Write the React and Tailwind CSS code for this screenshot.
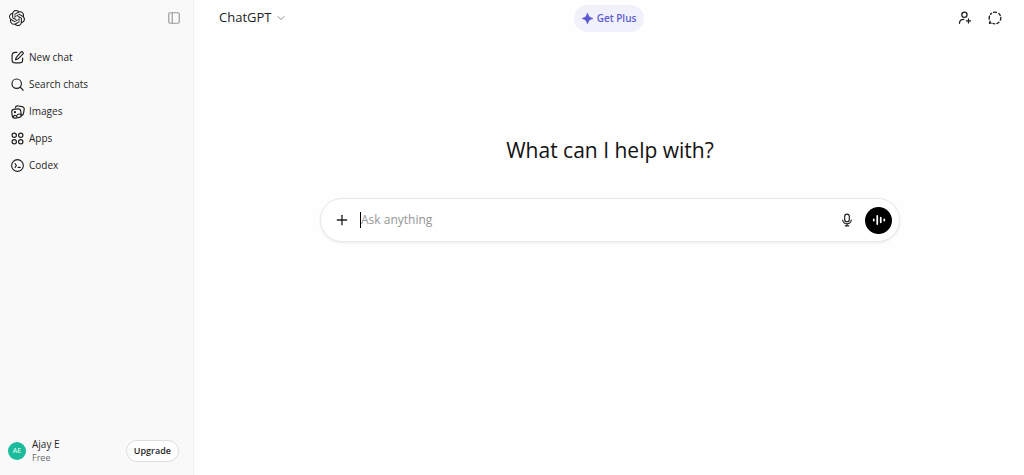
import { ChevronDown, Plus, PanelLeft } from 'lucide-react';
import { SiOpenai } from 'react-icons/si';

function StrokeIcon({ className, strokeWidth = 2, children }) {
  return (
    <svg
      className={className}
      viewBox="0 0 24 24"
      fill="none"
      stroke="currentColor"
      strokeWidth={strokeWidth}
      strokeLinecap="round"
      strokeLinejoin="round"
      aria-hidden="true"
    >
      {children}
    </svg>
  );
}

function NewChatIcon() {
  return (
    <StrokeIcon className="size-[13px]" strokeWidth={2.2}>
      <path d="M11 2.500H8C4 2.500 2 4.500 2 8.500V16c0 4 2 6 6 6h7.500c4 0 6-2 6-6v-3" />
      <path d="M18.200 2.200a2.400 2.400 0 0 1 3.500 3.500L14 13.500c-1.400 1.400-3.400 2.300-5.500 2.500.2-2.100 1.100-4.100 2.500-5.500z" />
    </StrokeIcon>
  );
}

function SearchIcon() {
  return (
    <StrokeIcon className="size-[13px]" strokeWidth={2.2}>
      <circle cx="10.500" cy="10.500" r="8.700" />
      <path d="m17 17 5.500 5.500" />
    </StrokeIcon>
  );
}

function ImagesIcon() {
  return (
    <StrokeIcon className="size-[14px]">
      <path d="M7.500 5C8 2.300 9.500 1.300 12 1.700l7 1.100c2.800.5 4 2 3.600 4.700l-1.200 7c-.3 2-1.300 3.200-3 3.700" />
      <rect x="1.700" y="7" width="15.500" height="15" rx="4.500" transform="rotate(-8 9.500 14.500)" />
      <circle cx="6.800" cy="12.200" r="1" />
      <path d="M3.500 20c3-3 5-3 7.500 1.500M10 18c2-3 4.500-3.500 7.500-1" />
    </StrokeIcon>
  );
}

function AppsIcon() {
  return (
    <StrokeIcon className="size-[13px]" strokeWidth={2.2}>
      <circle cx="6" cy="6" r="4" />
      <circle cx="18" cy="6" r="4" />
      <circle cx="6" cy="18" r="4" />
      <circle cx="18" cy="18" r="4" />
    </StrokeIcon>
  );
}

function CodexIcon() {
  return (
    <StrokeIcon className="size-[13px]" strokeWidth={2.1}>
      <circle cx="12" cy="12" r="10.800" />
      <path d="m7.500 8.500 2.500 3.500-2.500 3.500M13 15.500h4" />
    </StrokeIcon>
  );
}

function AddPersonIcon() {
  return (
    <StrokeIcon className="size-[14px]" strokeWidth={2.2}>
      <circle cx="11" cy="6.500" r="4.500" />
      <path d="M2.500 21c.3-4.300 3-6.500 7.500-6.500M18 13.500v7M14.500 17h7" />
    </StrokeIcon>
  );
}

function TemporaryChatIcon() {
  return (
    <StrokeIcon className="size-[14px]" strokeWidth={2.3}>
      <path d="M9.500 2.300a10 10 0 0 1 5 0M18.500 4.400a10 10 0 0 1 2.500 3.300M22 11a10 10 0 0 1-.7 4.600M18.800 19.300a10 10 0 0 1-3.600 2.200M11.500 22a10 10 0 0 1-3-.6M5.500 20.800 2.500 21l1-3.500M2.200 14a10 10 0 0 1 .3-5M4.500 5.500a10 10 0 0 1 1.500-1.400" />
    </StrokeIcon>
  );
}

function MicIcon() {
  return (
    <StrokeIcon className="size-[14px]">
      <rect x="8" y="2" width="8" height="13" rx="4" />
      <path d="M4.500 12c.8 4 3.700 6.500 7.500 6.500s6.700-2.500 7.500-6.500M12 18.500V22M9 22h6" />
    </StrokeIcon>
  );
}

function VoiceIcon() {
  return (
    <StrokeIcon className="size-[14px]" strokeWidth={3}>
      <path d="M3 11v2M9 5v14M15 8v8M21 11v2" />
    </StrokeIcon>
  );
}

function SparkleIcon() {
  return (
    <svg className="size-[11px]" viewBox="0 0 24 24" fill="currentColor" aria-hidden="true">
      <path d="M12 0c1 0 1.500.8 1.800 2.500 1 4.500 3.200 6.700 7.700 7.700 1.700.3 2.500.8 2.500 1.800s-.8 1.500-2.500 1.800c-4.500 1-6.700 3.200-7.700 7.700C13.500 23.200 13 24 12 24s-1.500-.8-1.800-2.500c-1-4.500-3.200-6.700-7.700-7.700C.8 13.500 0 13 0 12s.8-1.500 2.500-1.800c4.500-1 6.700-3.200 7.700-7.700C10.500.8 11 0 12 0z" />
    </svg>
  );
}

const navItems = [
  { label: 'New chat', Icon: NewChatIcon },
  { label: 'Search chats', Icon: SearchIcon },
  { label: 'Images', Icon: ImagesIcon },
  { label: 'Apps', Icon: AppsIcon },
  { label: 'Codex', Icon: CodexIcon },
];

function Sidebar() {
  return (
    <aside className="flex w-[194px] shrink-0 flex-col border-r border-[#f0f0f0] bg-[#f9f9f9]">
      <div className="flex h-9 items-center justify-between pr-3 pl-[9px]">
        <a href="#" aria-label="Home">
          <SiOpenai className="size-4" />
        </a>
        <button aria-label="Close sidebar" className="text-[#9a9a9a]">
          <PanelLeft className="size-[14px]" strokeWidth={2} />
        </button>
      </div>

      {/* Navigation */}
      <nav className="mt-2">
        {navItems.map(({ label, Icon }) => (
          <a key={label} href="#" className="flex h-[27px] items-center gap-1 px-[10px] text-[10px]">
            <span className="flex w-[15px] justify-center">
              <Icon />
            </span>
            {label}
          </a>
        ))}
      </nav>

      {/* Account */}
      <div className="mt-auto flex items-center px-2 pb-[10px]">
        <span className="flex size-[18px] items-center justify-center rounded-full bg-[#1abc9c] text-[7px] text-white">
          AE
        </span>
        <div className="ml-[6px] flex-1">
          <p className="text-[10px] leading-[14px]">Ajay E</p>
          <p className="text-[9px] leading-[14px] text-[#6b6b6b]">Free</p>
        </div>
        <button className="mr-[6px] h-[22px] rounded-full border border-[#dedede] bg-white px-[7px] text-[9px] font-semibold">
          Upgrade
        </button>
      </div>
    </aside>
  );
}

function Header() {
  return (
    <header className="grid h-9 grid-cols-3 items-center px-[22px]">
      <button className="ml-[3px] flex items-center gap-1 justify-self-start text-[13px]">
        ChatGPT
        <ChevronDown className="size-3 text-[#8f8f8f]" />
      </button>
      <button className="flex h-[27px] items-center gap-1 justify-self-center rounded-full bg-[#f1f1fc] px-2 text-[10px] font-semibold text-[#5d5bd0]">
        <SparkleIcon />
        Get Plus
      </button>
      <div className="flex items-center gap-4 justify-self-end">
        <button aria-label="Add people">
          <AddPersonIcon />
        </button>
        <button aria-label="Temporary chat">
          <TemporaryChatIcon />
        </button>
      </div>
    </header>
  );
}

function Composer() {
  return (
    <form
      className="flex h-11 w-full max-w-[580px] items-center rounded-full border border-[#e8e8e8] bg-white pr-[7px] pl-[13px] shadow-[0_1px_3px_rgba(0,0,0,0.08)]"
      onSubmit={(e) => e.preventDefault()}
    >
      <button type="button" aria-label="Add files">
        <Plus className="size-4" strokeWidth={2} />
      </button>
      <span className="ml-[10px] h-4 w-px bg-black" />
      <input
        type="text"
        aria-label="Ask anything"
        placeholder="Ask anything"
        className="min-w-0 flex-1 bg-transparent text-[12px] outline-none placeholder:text-[#959595]"
      />
      <button type="button" aria-label="Dictate">
        <MicIcon />
      </button>
      <button
        type="button"
        aria-label="Use voice"
        className="ml-[11px] flex size-[27px] items-center justify-center rounded-full bg-black text-white"
      >
        <VoiceIcon />
      </button>
    </form>
  );
}

export default function App() {
  return (
    <div className="flex min-h-screen bg-[#fefefe] font-['Open_Sans','Noto_Sans',sans-serif] text-[#1f1f1f]">
      <Sidebar />
      <main className="flex min-w-0 flex-1 flex-col">
        <Header />
        <div className="flex flex-col items-center pt-[98px] pr-4 pl-[18px]">
          <h1 className="mb-8 text-[21px] leading-8 text-[#111111]">What can I help with?</h1>
          <Composer />
        </div>
      </main>
    </div>
  );
}
